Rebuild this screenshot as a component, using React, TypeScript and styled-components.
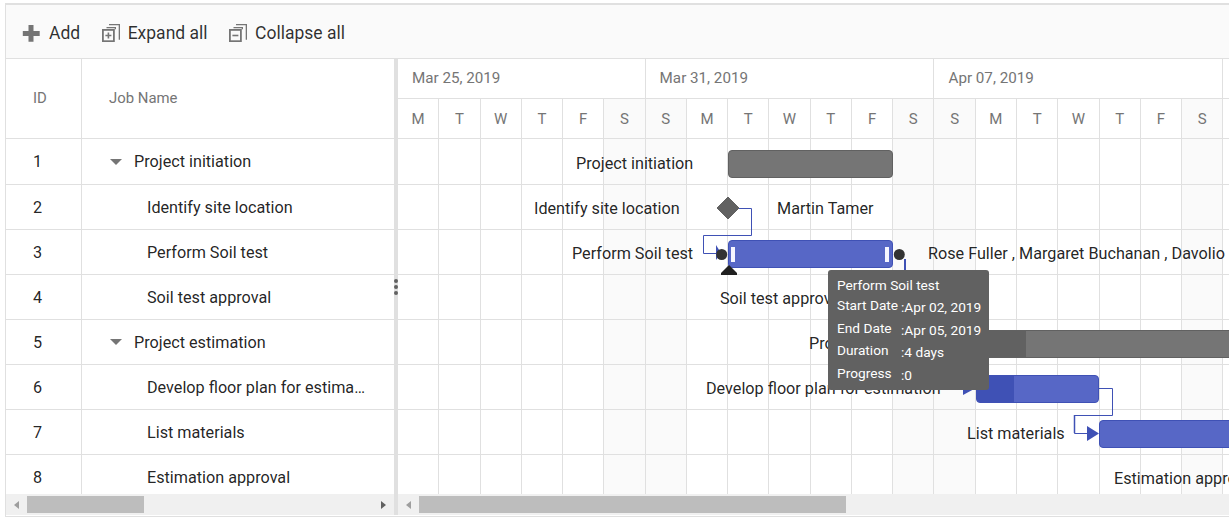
import React from 'react';
import styled, { createGlobalStyle } from 'styled-components';

const LINE = '#e0e0e0';
const DAY_WIDTH = 41.27;

const GlobalStyle = createGlobalStyle`
  html, body {
    margin: 0;
    background: #fff;
    overflow: hidden;
  }
  body {
    font-family: Roboto, "Liberation Sans", sans-serif;
    color: rgba(0, 0, 0, 0.87);
  }
`;

const Frame = styled.div`
  display: flex;
  flex-direction: column;
  box-sizing: border-box;
  width: 1224px;
  height: 514px;
  margin: 3px 0 0 5px;
  border-top: 2px solid ${LINE};
  border-left: 1px solid ${LINE};
  border-bottom: 1px solid ${LINE};
  overflow: hidden;
`;

const Toolbar = styled.div`
  display: flex;
  align-items: center;
  flex: none;
  box-sizing: border-box;
  height: 54px;
  padding: 2px 0 0 16px;
  gap: 21.5px;
  background: #fafafa;
  border-bottom: 1px solid ${LINE};
`;

const ToolButton = styled.div`
  display: flex;
  align-items: center;
  gap: 8px;
  font-size: 17.5px;
  color: rgba(0, 0, 0, 0.82);
`;

const Main = styled.div`
  display: flex;
  flex: 1;
  min-height: 0;
  margin-bottom: 1px;
`;

const GridPane = styled.div`
  display: flex;
  flex-direction: column;
  flex: none;
  width: 388px;
`;

const GridHeader = styled.div`
  display: flex;
  flex: none;
  box-sizing: border-box;
  height: 80px;
  border-bottom: 1px solid ${LINE};
  font-size: 14.9px;
  color: #757575;
`;

const HeaderLabel = styled.span`
  margin-bottom: 2px;
`;

const IdCell = styled.div`
  display: flex;
  align-items: center;
  flex: none;
  box-sizing: border-box;
  width: 76px;
  padding-left: 27px;
  border-right: 1px solid ${LINE};
`;

const NameCell = styled.div<{ $indent: number }>`
  display: flex;
  align-items: center;
  flex: 1;
  min-width: 0;
  padding-left: ${(p) => p.$indent}px;
  padding-right: 28px;
`;

const GridRows = styled.div`
  flex: 1;
  min-height: 0;
  overflow: hidden;
`;

const GridRow = styled.div<{ $first?: boolean }>`
  display: flex;
  box-sizing: border-box;
  height: ${(p) => (p.$first ? 46 : 45)}px;
  border-bottom: 1px solid ${LINE};
  font-size: 16.2px;
`;

const Caret = styled.span`
  flex: none;
  width: 0;
  height: 0;
  margin-right: 12px;
  border-left: 6px solid transparent;
  border-right: 6px solid transparent;
  border-top: 6px solid #757575;
`;

const NameText = styled.span`
  overflow: hidden;
  white-space: nowrap;
  text-overflow: ellipsis;
`;

const ScrollBar = styled.div`
  display: flex;
  align-items: center;
  flex: none;
  box-sizing: border-box;
  height: 21px;
  padding: 0 8px;
  background: #f0f0f0;
`;

const ScrollThumb = styled.div<{ $left: number; $width: number }>`
  flex: none;
  height: 17px;
  margin-left: ${(p) => p.$left}px;
  width: ${(p) => p.$width}px;
  background: #bdbdbd;
`;

const ScrollArrow = styled.span<{ $right?: boolean; $dark?: boolean }>`
  flex: none;
  width: 0;
  height: 0;
  border-top: 4.5px solid transparent;
  border-bottom: 4.5px solid transparent;
  ${(p) =>
    p.$right
      ? `margin-left: auto; border-left: 5px solid ${p.$dark ? '#616161' : '#9e9e9e'};`
      : `border-right: 5px solid ${p.$dark ? '#616161' : '#9e9e9e'};`}
`;

const Splitter = styled.div`
  display: flex;
  flex-direction: column;
  align-items: center;
  justify-content: center;
  flex: none;
  gap: 2px;
  width: 4px;
  background: ${LINE};
`;

const SplitterDot = styled.span`
  width: 4px;
  height: 4px;
  border-radius: 50%;
  background: #616161;
`;

const ChartPane = styled.div`
  display: flex;
  flex-direction: column;
  flex: 1;
  min-width: 0;
`;

const Timeline = styled.div`
  flex: none;
  box-sizing: border-box;
  height: 80px;
  overflow: hidden;
  border-bottom: 1px solid ${LINE};
  color: #757575;
`;

const WeekRow = styled.div`
  display: flex;
  box-sizing: border-box;
  height: 40px;
  border-bottom: 1px solid ${LINE};
  width: 1000px;
`;

const WeekCell = styled.div<{ $days: number }>`
  flex: none;
  display: flex;
  align-items: center;
  box-sizing: border-box;
  width: ${(p) => p.$days * DAY_WIDTH}px;
  padding-left: 14px;
  border-right: 1px solid ${LINE};
  font-size: 15.2px;
`;

const DayRow = styled.div`
  display: flex;
  height: 39px;
  width: 1000px;
`;

const DayCell = styled.div<{ $weekend: boolean }>`
  flex: none;
  display: flex;
  align-items: center;
  justify-content: center;
  box-sizing: border-box;
  width: ${DAY_WIDTH}px;
  border-right: 1px solid ${LINE};
  background: ${(p) => (p.$weekend ? '#fafafa' : '#fff')};
  font-size: 15px;
`;

const Canvas = styled.div`
  position: relative;
  flex: 1;
  min-height: 0;
  overflow: hidden;
`;

const ColumnGrid = styled.div`
  display: flex;
  height: 100%;
  width: 1000px;
`;

const Column = styled.div<{ $weekend: boolean }>`
  flex: none;
  box-sizing: border-box;
  width: ${DAY_WIDTH}px;
  border-right: 1px solid ${LINE};
  background: ${(p) => (p.$weekend ? '#fafafa' : 'transparent')};
`;

const RowLines = styled.div`
  position: absolute;
  inset: 0;
`;

const RowLine = styled.div<{ $first?: boolean }>`
  box-sizing: border-box;
  height: ${(p) => (p.$first ? 46 : 45)}px;
  border-bottom: 1px solid ${LINE};
`;

const Bar = styled.div<{ $x: number; $y: number; $w: number; $parent?: boolean }>`
  position: absolute;
  left: ${(p) => p.$x}px;
  top: ${(p) => p.$y}px;
  width: ${(p) => p.$w}px;
  height: 28px;
  box-sizing: border-box;
  overflow: hidden;
  border-radius: 4px;
  background: ${(p) => (p.$parent ? '#757575' : '#5767c6')};
  border: 1px solid ${(p) => (p.$parent ? '#616161' : '#3f51b5')};
`;

const BarProgress = styled.div<{ $w: number; $parent?: boolean }>`
  width: ${(p) => p.$w}px;
  height: 100%;
  background: ${(p) => (p.$parent ? '#616161' : '#3f51b5')};
`;

const ResizeHandle = styled.span<{ $x: number }>`
  position: absolute;
  left: ${(p) => p.$x}px;
  top: 6px;
  width: 4px;
  height: 15px;
  background: #f5f5ff;
`;

const BarLabel = styled.span<{ $x: number; $y: number }>`
  position: absolute;
  left: ${(p) => p.$x}px;
  top: ${(p) => p.$y}px;
  line-height: 20px;
  font-size: 16.2px;
  white-space: nowrap;
`;

const Overlay = styled.svg`
  position: absolute;
  left: 0;
  top: 0;
`;

const Tooltip = styled.div`
  position: absolute;
  left: 430px;
  top: 131px;
  box-sizing: border-box;
  width: 161px;
  height: 120px;
  padding: 7px 9px;
  border-radius: 3px;
  background: #616161;
  color: #fff;
  font-size: 13.7px;
`;

const TipTitle = styled.div`
  line-height: 16px;
  margin-bottom: 4px;
`;

const TipRow = styled.div`
  display: flex;
  height: 22.6px;
  line-height: 16px;
`;

const TipKey = styled.span`
  flex: none;
  width: 64px;
`;

const TipValue = styled.span`
  padding-top: 2px;
  white-space: nowrap;
`;

const weeks = [
  { label: 'Mar 25, 2019', days: 6 },
  { label: 'Mar 31, 2019', days: 7 },
  { label: 'Apr 07, 2019', days: 7 },
];

const dayNames = ['M', 'T', 'W', 'T', 'F', 'S', 'S', 'M', 'T', 'W', 'T', 'F', 'S', 'S', 'M', 'T', 'W', 'T', 'F', 'S'];
const weekendDays = [5, 6, 12, 13, 19];

const jobs = [
  { id: 1, name: 'Project initiation', parent: true },
  { id: 2, name: 'Identify site location' },
  { id: 3, name: 'Perform Soil test' },
  { id: 4, name: 'Soil test approval' },
  { id: 5, name: 'Project estimation', parent: true },
  { id: 6, name: 'Develop floor plan for estimation' },
  { id: 7, name: 'List materials' },
  { id: 8, name: 'Estimation approval' },
];

const labels = [
  { text: 'Project initiation', x: 178, y: 15 },
  { text: 'Identify site location', x: 136, y: 60 },
  { text: 'Martin Tamer', x: 379, y: 60 },
  { text: 'Perform Soil test', x: 174, y: 105 },
  { text: 'Rose Fuller , Margaret Buchanan , Davolio', x: 530, y: 105 },
  { text: 'Soil test approval', x: 322, y: 150 },
  { text: 'Project estimation', x: 411, y: 195 },
  { text: 'Develop floor plan for estimation', x: 308, y: 240 },
  { text: 'List materials', x: 569, y: 285 },
  { text: 'Estimation approval', x: 716, y: 330 },
];

const tipRows = [
  ['Start Date', 'Apr 02, 2019'],
  ['End Date', 'Apr 05, 2019'],
  ['Duration', '4 days'],
  ['Progress', '0'],
];

const AddIcon = () => (
  <svg width="19" height="18" viewBox="0 0 19 18">
    <path d="M6.500 1h5v6h6.200v5h-6.200v5.800h-5v-5.800H0.800v-5h5.700z" fill="#757575" />
  </svg>
);

const StackIcon = ({ expand }: { expand?: boolean }) => (
  <svg width="18" height="18" viewBox="0 0 18 18" fill="none">
    <path d="M7 0.650h10.350v15" stroke="#757575" strokeWidth="1.300" />
    <path d="M4.500 3.650h8.850v1.500" stroke="#757575" strokeWidth="1.300" />
    <rect x="0.900" y="5.900" width="11" height="11.300" stroke="#757575" strokeWidth="1.800" />
    <path d={expand ? 'M3.400 11.500h6M6.400 8.500v6' : 'M3.400 11.500h6'} stroke="#757575" strokeWidth="1.600" />
  </svg>
);

const App = () => (
  <>
    <GlobalStyle />
    <Frame>
      <Toolbar>
        <ToolButton>
          <AddIcon />
          Add
        </ToolButton>
        <ToolButton>
          <StackIcon expand />
          Expand all
        </ToolButton>
        <ToolButton>
          <StackIcon />
          Collapse all
        </ToolButton>
      </Toolbar>
      <Main>
        <GridPane>
          <GridHeader>
            <IdCell>
              <HeaderLabel>ID</HeaderLabel>
            </IdCell>
            <NameCell $indent={27}>
              <HeaderLabel>Job Name</HeaderLabel>
            </NameCell>
          </GridHeader>
          <GridRows>
            {jobs.map((job, i) => (
              <GridRow key={job.id} $first={i === 0}>
                <IdCell>{job.id}</IdCell>
                <NameCell $indent={job.parent ? 28 : 65}>
                  {job.parent && <Caret />}
                  <NameText>{job.name}</NameText>
                </NameCell>
              </GridRow>
            ))}
          </GridRows>
          <ScrollBar>
            <ScrollArrow />
            <ScrollThumb $left={8} $width={117} />
            <ScrollArrow $right $dark />
          </ScrollBar>
        </GridPane>
        <Splitter>
          <SplitterDot />
          <SplitterDot />
          <SplitterDot />
        </Splitter>
        <ChartPane>
          <Timeline>
            <WeekRow>
              {weeks.map((week) => (
                <WeekCell key={week.label} $days={week.days}>
                  <HeaderLabel>{week.label}</HeaderLabel>
                </WeekCell>
              ))}
            </WeekRow>
            <DayRow>
              {dayNames.map((day, i) => (
                <DayCell key={i} $weekend={weekendDays.includes(i)}>
                  {day}
                </DayCell>
              ))}
            </DayRow>
          </Timeline>
          <Canvas>
            <ColumnGrid>
              {dayNames.map((_, i) => (
                <Column key={i} $weekend={weekendDays.includes(i)} />
              ))}
            </ColumnGrid>
            <RowLines>
              {jobs.map((job, i) => (
                <RowLine key={job.id} $first={i === 0} />
              ))}
            </RowLines>
            {labels.map((label) => (
              <BarLabel key={label.text} $x={label.x} $y={label.y}>
                {label.text}
              </BarLabel>
            ))}
            <Bar $x={330} $y={11} $w={165} $parent />
            <Bar $x={330} $y={101} $w={165}>
              <ResizeHandle $x={2} />
              <ResizeHandle $x={156} />
            </Bar>
            <Bar $x={578} $y={191} $w={700} $parent>
              <BarProgress $w={49} $parent />
            </Bar>
            <Bar $x={578} $y={236} $w={123}>
              <BarProgress $w={37} />
            </Bar>
            <Bar $x={701} $y={281} $w={200} />
            <Overlay width="831" height="355" viewBox="0 0 831 355" fill="none">
              <path d="M341 69.500h12.500v27h-48v18h13" stroke="#3f51b5" strokeWidth="1" />
              <path d="M318 106l0 15l5-7z" fill="#3f51b5" />
              <path d="M507 120v12" stroke="#3f51b5" strokeWidth="2" />
              <path d="M701 249.500h13.500v27h-38v18h13" stroke="#3f51b5" strokeWidth="1" />
              <path d="M676.500 276v18" stroke="#3f51b5" strokeWidth="1.500" />
              <path d="M689 287l12 7.500l-12 7.500z" fill="#3f51b5" />
              <path d="M565 242l13 7l-13 7z" fill="#3f51b5" />
              <path d="M330 58l11 11l-11 11l-11-11z" fill="#616161" stroke="#616161" strokeWidth="1" />
              <circle cx="323.700" cy="115.500" r="5.500" fill="#333" />
              <circle cx="501.300" cy="115.500" r="5.500" fill="#333" />
              <path d="M331 126l8 8v2h-16v-2z" fill="#1f1f1f" />
            </Overlay>
            <Tooltip>
              <TipTitle>Perform Soil test</TipTitle>
              {tipRows.map(([key, value]) => (
                <TipRow key={key}>
                  <TipKey>{key}</TipKey>
                  <TipValue>:{value}</TipValue>
                </TipRow>
              ))}
            </Tooltip>
          </Canvas>
          <ScrollBar>
            <ScrollArrow />
            <ScrollThumb $left={8} $width={427} />
          </ScrollBar>
        </ChartPane>
      </Main>
    </Frame>
  </>
);

export default App;
